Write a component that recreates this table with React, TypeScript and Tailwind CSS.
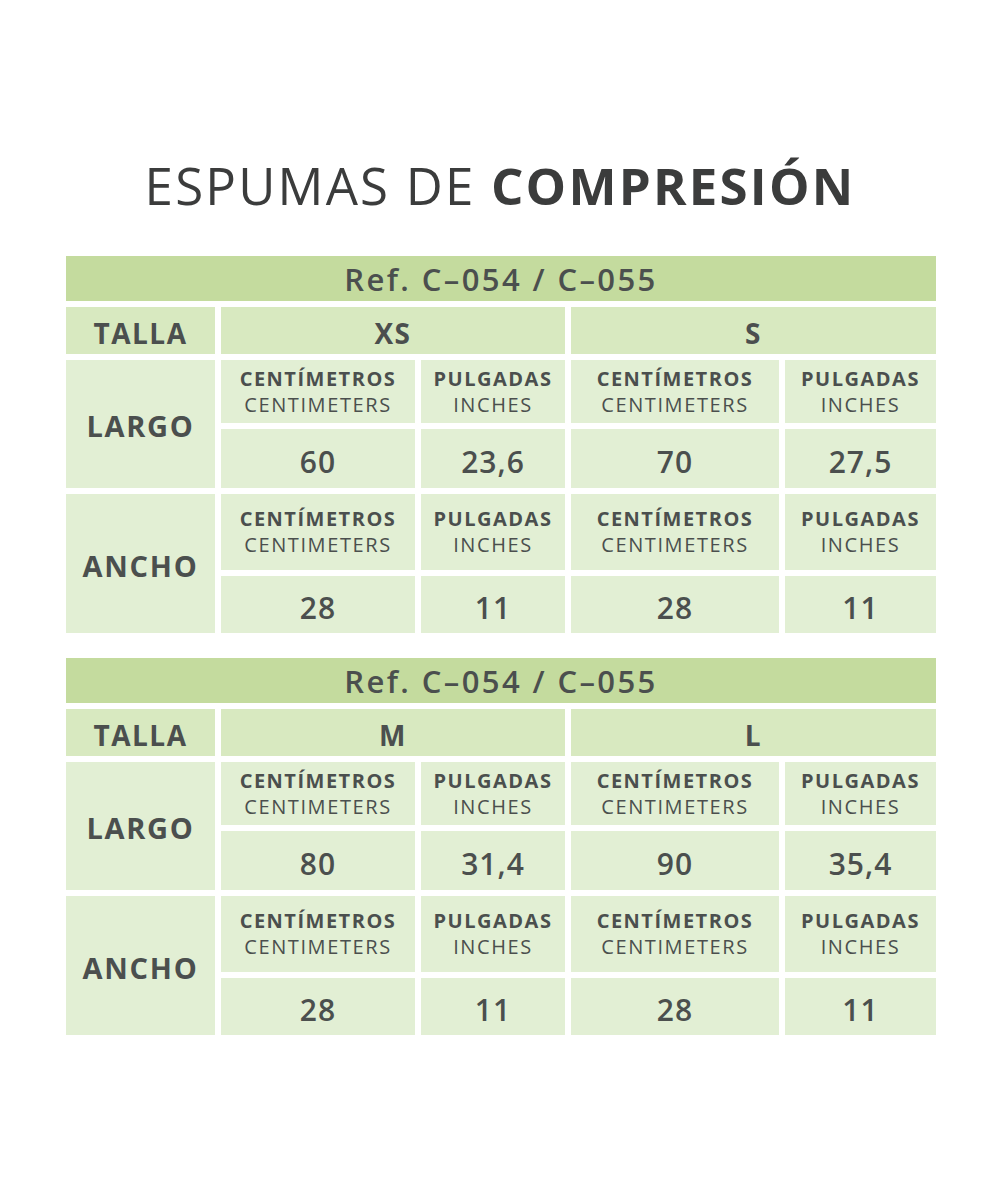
const font = { fontFamily: '"Open Sans", "DejaVu Sans", sans-serif' }

type Block = {
  sizes: [string, string]
  largo: [string, string, string, string]
  ancho: [string, string, string, string]
}

const tables: Block[] = [
  { sizes: ['XS', 'S'], largo: ['60', '23,6', '70', '27,5'], ancho: ['28', '11', '28', '11'] },
  { sizes: ['M', 'L'], largo: ['80', '31,4', '90', '35,4'], ancho: ['28', '11', '28', '11'] },
]

function UnitHeader({ top, bottom }: { top: string; bottom: string }) {
  return (
    <div className="bg-[#e2efd4] flex flex-col items-center justify-center leading-[26px]">
      <span className="text-[20px] font-bold tracking-[1.5px]">{top}</span>
      <span className="text-[20px] font-normal tracking-[1.6px]">{bottom}</span>
    </div>
  )
}

function Value({ v }: { v: string }) {
  return (
    <div className="bg-[#e2efd4] flex items-center justify-center pt-[6px] text-[30px] font-semibold tracking-[1px]">
      {v}
    </div>
  )
}

function SizeTable({ data }: { data: Block }) {
  const dims = [
    { label: 'LARGO', vals: data.largo },
    { label: 'ANCHO', vals: data.ancho },
  ]
  return (
    <div className="grid grid-cols-[149px_194px_144px_208px_151px] grid-rows-[45px_47px_63px_59px_76px_57px] gap-[6px] text-[#4b4f4e]">
      {/* Ref bar */}
      <div className="col-span-5 bg-[#c4db9e] flex items-center justify-center text-[31px] font-semibold tracking-[2.4px] pt-[2px]">
        Ref. C–054 / C–055
      </div>

      {/* Talla row */}
      <div className="bg-[#d8e9c0] flex items-center justify-center text-[28px] font-bold tracking-[1.5px] pt-[4px]">
        TALLA
      </div>
      <div className="col-span-2 bg-[#d8e9c0] flex items-center justify-center text-[28px] font-bold tracking-[1.5px] pt-[4px]">
        {data.sizes[0]}
      </div>
      <div className="col-span-2 bg-[#d8e9c0] flex items-center justify-center text-[28px] font-bold tracking-[1.5px] pt-[4px]">
        {data.sizes[1]}
      </div>

      {dims.map((d) => (
        <div key={d.label} className="contents">
          <div className="row-span-2 bg-[#e2efd4] flex items-center justify-center text-[29px] font-bold tracking-[1.7px] pt-[4px]">
            {d.label}
          </div>
          <UnitHeader top="CENTÍMETROS" bottom="CENTIMETERS" />
          <UnitHeader top="PULGADAS" bottom="INCHES" />
          <UnitHeader top="CENTÍMETROS" bottom="CENTIMETERS" />
          <UnitHeader top="PULGADAS" bottom="INCHES" />
          {d.vals.map((v, i) => (
            <Value key={i} v={v} />
          ))}
        </div>
      ))}
    </div>
  )
}

export default function App() {
  return (
    <div className="w-[1000px] h-[1200px] bg-white" style={font}>
      <h1 className="pt-[150px] h-[256px] text-center text-[51px] leading-[70px] tracking-[2.2px] text-[#3b3c3c]">
        <span className="font-normal">ESPUMAS DE </span>
        <span className="font-bold">COMPRESIÓN</span>
      </h1>
      <div className="pl-[66px] flex flex-col gap-[25px]">
        {tables.map((t, i) => (
          <SizeTable key={i} data={t} />
        ))}
      </div>
    </div>
  )
}
